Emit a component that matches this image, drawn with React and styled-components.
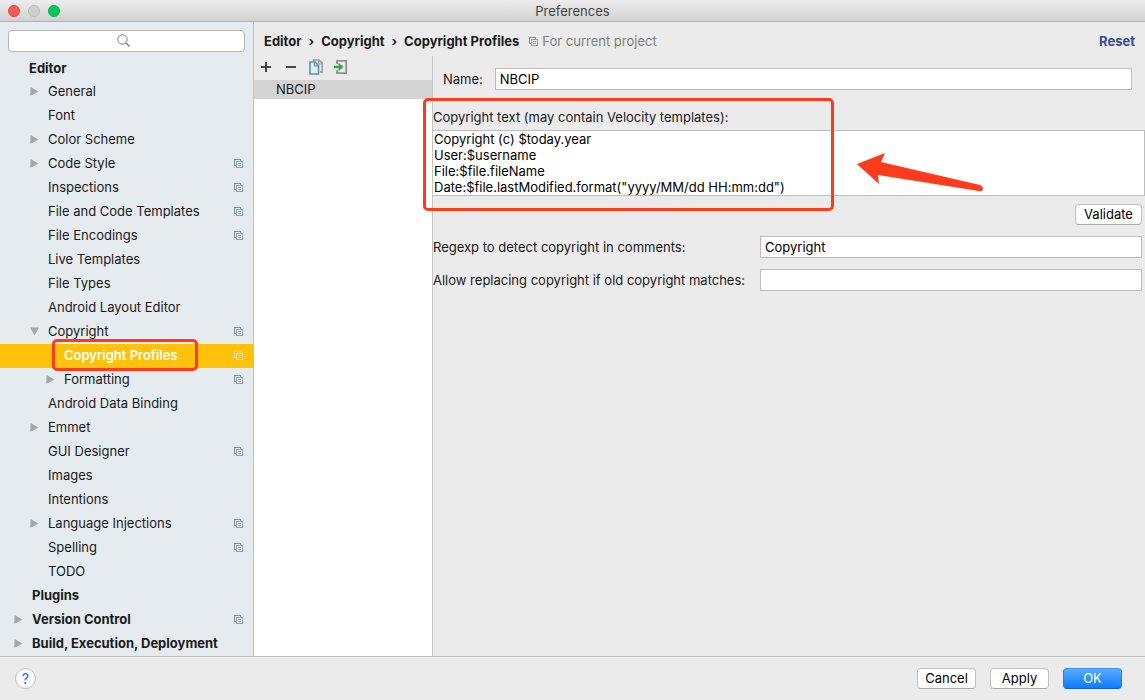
import React, { useState } from "react";
import styled, { createGlobalStyle, css } from "styled-components";

const settings = [
  { name: "Editor", level: 1, bold: true, first: true },
  { name: "General", level: 2, arrow: "closed" },
  { name: "Font", level: 2 },
  { name: "Color Scheme", level: 2, arrow: "closed" },
  { name: "Code Style", level: 2, arrow: "closed", project: true },
  { name: "Inspections", level: 2, project: true },
  { name: "File and Code Templates", level: 2, project: true },
  { name: "File Encodings", level: 2, project: true },
  { name: "Live Templates", level: 2 },
  { name: "File Types", level: 2 },
  { name: "Android Layout Editor", level: 2 },
  { name: "Copyright", level: 2, arrow: "open", project: true },
  { name: "Copyright Profiles", level: 3, project: true, marked: true },
  { name: "Formatting", level: 3, arrow: "closed", project: true },
  { name: "Android Data Binding", level: 2 },
  { name: "Emmet", level: 2, arrow: "closed" },
  { name: "GUI Designer", level: 2, project: true },
  { name: "Images", level: 2 },
  { name: "Intentions", level: 2 },
  { name: "Language Injections", level: 2, arrow: "closed", project: true },
  { name: "Spelling", level: 2, project: true },
  { name: "TODO", level: 2 },
  { name: "Plugins", level: 1, bold: true },
  { name: "Version Control", level: 1, bold: true, arrow: "closed", project: true },
  { name: "Build, Execution, Deployment", level: 1, bold: true, arrow: "closed" },
];

const template = `Copyright (c) $today.year
User:$username
File:$file.fileName
Date:$file.lastModified.format("yyyy/MM/dd HH:mm:dd")`;

function ProjectIcon({ light }) {
  const back = light ? "#d3d9b4" : "#5f9dbf";
  const front = light ? "#dcdcc8" : "#9a9fa2";
  return (
    <svg width="9" height="9" viewBox="0 0 9 9" fill="none" shapeRendering="crispEdges">
      <path d="M2 6.5H.5V.5H6.5V2" stroke={back} />
      <path d="M2.5 2.5h6v6h-6zM4 4.5h3M4 6.5h3" stroke={front} />
    </svg>
  );
}

function SearchIcon() {
  return (
    <svg width="13" height="13" viewBox="0 0 13 13" fill="none" stroke="#777">
      <circle cx="5.5" cy="5.5" r="4.7" />
      <path d="M9 9l3.5 3.5" strokeWidth="1.2" />
    </svg>
  );
}

function Arrow({ state }) {
  if (!state) return <ArrowSlot />;
  return (
    <ArrowSlot>
      <svg width="9" height="9" viewBox="0 0 9 9" fill="#a5a8aa">
        <path d={state === "open" ? "M0 .5h9L4.5 8.5z" : "M.5 0v9L8.5 4.5z"} />
      </svg>
    </ArrowSlot>
  );
}

function App() {
  const [selected, setSelected] = useState("Copyright Profiles");
  const [name, setName] = useState("NBCIP");
  const [text, setText] = useState(template);
  const [regexp, setRegexp] = useState("Copyright");
  const [replace, setReplace] = useState("");

  return (
    <Window>
      <GlobalStyle />
      <TitleBar>
        <Lights>
          <Light $color="#fc5753" $edge="#e0443f" aria-label="Close" />
          <Light $color="#cfcfcf" $edge="#b9b9b9" aria-label="Minimize" />
          <Light $color="#06c955" $edge="#05b04a" aria-label="Zoom" />
        </Lights>
        <Title>Preferences</Title>
      </TitleBar>

      <Body>
        <Sidebar>
          <Search>
            <SearchInput type="search" aria-label="Search settings" />
            <SearchMark>
              <SearchIcon />
            </SearchMark>
          </Search>
          <Tree>
            {settings.map((item) => {
              const active = item.name === selected;
              return (
                <li key={item.name}>
                  <TreeRow
                    type="button"
                    $level={item.level}
                    $bold={item.bold}
                    $active={active}
                    $first={item.first}
                    onClick={() => setSelected(item.name)}
                  >
                    <Arrow state={item.arrow} />
                    <TreeName>
                      {item.name}
                      {item.marked && <RowMark />}
                    </TreeName>
                    {item.project && <ProjectIcon light={active} />}
                  </TreeRow>
                </li>
              );
            })}
          </Tree>
        </Sidebar>

        <Main>
          <Header>
            <Crumbs>
              <span>Editor</span>
              <span>›</span>
              <span>Copyright</span>
              <span>›</span>
              <span>Copyright Profiles</span>
            </Crumbs>
            <Scope>
              <ProjectIcon />
              For current project
            </Scope>
            <Reset href="#reset">Reset</Reset>
          </Header>

          <Content>
            <Profiles>
              <Toolbar>
                <ToolButton aria-label="Add">
                  <svg width="12" height="12" viewBox="0 0 12 12" stroke="#454545" strokeWidth="2">
                    <path d="M6 1v10M1 6h10" />
                  </svg>
                </ToolButton>
                <ToolButton aria-label="Remove">
                  <svg width="12" height="12" viewBox="0 0 12 12" stroke="#454545" strokeWidth="2">
                    <path d="M1 6h10" />
                  </svg>
                </ToolButton>
                <ToolButton aria-label="Copy">
                  <svg width="16" height="16" viewBox="0 0 16 16" fill="none">
                    <path d="M5.5 2V1H11l3.2 3.2V13H12" stroke="#9b9b9b" strokeWidth="1.6" />
                    <path d="M10.5 1v4h4" stroke="#9b9b9b" />
                    <path d="M2 3h5l3.5 3.5V15H2z" fill="#e6edf2" stroke="#5c91b3" strokeWidth="1.6" />
                    <path d="M6.7 3v4h4" stroke="#5c91b3" strokeWidth="1.2" />
                  </svg>
                </ToolButton>
                <ToolButton aria-label="Import">
                  <svg width="16" height="16" viewBox="0 0 16 16" fill="none">
                    <path d="M4 5V1.8h9.2v12.4H4V11" stroke="#929292" strokeWidth="1.8" />
                    <path d="M1 6.7h4.5V3.8L10.5 8l-5 4.2V9.3H1z" fill="#30a950" />
                  </svg>
                </ToolButton>
              </Toolbar>
              <ProfileList>
                <Profile>NBCIP</Profile>
              </ProfileList>
            </Profiles>

            <Form onSubmit={(e) => e.preventDefault()}>
              <NameRow>
                <label htmlFor="name">Name:</label>
                <Field id="name" value={name} onChange={(e) => setName(e.target.value)} />
              </NameRow>
              <TextSection>
                <TextLabel htmlFor="text">
                  Copyright text (may contain Velocity templates):
                </TextLabel>
                <TextArea
                  id="text"
                  rows={4}
                  spellCheck={false}
                  value={text}
                  onChange={(e) => setText(e.target.value)}
                />
                <TextMark />
                <Pointer width="128" height="42" viewBox="0 0 128 42">
                  <path
                    d="M1 12L29 1L25 10L124 33Q127 34 127 37Q126 40 123 39L22 23L23 32Z"
                    fill="#ff3b1d"
                  />
                </Pointer>
              </TextSection>
              <ValidateRow>
                <Button type="button">Validate</Button>
              </ValidateRow>
              <Matches>
                <label htmlFor="regexp">Regexp to detect copyright in comments:</label>
                <Field id="regexp" value={regexp} onChange={(e) => setRegexp(e.target.value)} />
                <label htmlFor="replace">Allow replacing copyright if old copyright matches:</label>
                <Field id="replace" value={replace} onChange={(e) => setReplace(e.target.value)} />
              </Matches>
            </Form>
          </Content>
        </Main>
      </Body>

      <Footer>
        <Help type="button">?</Help>
        <Actions>
          <Button type="button" $wide>Cancel</Button>
          <Button type="button" $wide>Apply</Button>
          <Button type="button" $wide $primary>OK</Button>
        </Actions>
      </Footer>
    </Window>
  );
}

const GlobalStyle = createGlobalStyle`
  * {
    box-sizing: border-box;
  }
  body {
    margin: 0;
    background: #ebebeb;
  }
  body, button, input, textarea {
    font-family: Inter, "Liberation Sans", sans-serif;
    font-size: 13px;
    line-height: 16px;
    color: #1a1a1a;
  }
  button, input, textarea {
    margin: 0;
  }
  svg {
    display: block;
    flex-shrink: 0;
  }
`;

const mark = css`
  position: absolute;
  border: 3px solid #ff3b1d;
  border-radius: 5px;
  pointer-events: none;
`;

const Window = styled.div`
  display: flex;
  flex-direction: column;
  min-height: 100vh;
  background: #ebebeb;
`;

const TitleBar = styled.header`
  display: grid;
  grid-template-columns: 1fr auto 1fr;
  align-items: center;
  height: 22px;
  padding: 0 8px;
  background: linear-gradient(#ececec, #d2d2d2);
  border-bottom: 1px solid #b1b1b1;
`;

const Lights = styled.div`
  display: flex;
  gap: 8px;
`;

const Light = styled.button`
  width: 12px;
  height: 12px;
  padding: 0;
  border: 1px solid ${(p) => p.$edge};
  border-radius: 50%;
  background: ${(p) => p.$color};
`;

const Title = styled.div`
  color: #454545;
`;

const Body = styled.div`
  display: flex;
  flex: 1;
`;

const Sidebar = styled.nav`
  width: 254px;
  flex-shrink: 0;
  background: #e6ebef;
  border-right: 1px solid #c0c2c4;
`;

const Search = styled.div`
  position: relative;
  padding: 8px 8px 6px;
`;

const SearchInput = styled.input`
  display: block;
  width: 100%;
  height: 22px;
  padding: 0 8px;
  border: 1px solid #b5b7b9;
  border-radius: 4px;
  background: #fff;
`;

const SearchMark = styled.span`
  position: absolute;
  top: 12px;
  left: 50%;
  margin-left: -10px;
  pointer-events: none;
`;

const Tree = styled.ul`
  margin: 0;
  padding: 0;
  list-style: none;
`;

const TreeRow = styled.button`
  display: flex;
  align-items: center;
  width: 100%;
  height: ${(p) => (p.$first ? 22 : 24)}px;
  padding: 0 10px 2px ${(p) => (p.$first ? 11 : p.$level * 16 - 2)}px;
  border: 0;
  background: ${(p) => (p.$active ? "#ffc20a" : "transparent")};
  color: ${(p) => (p.$active ? "#fff" : "#1a1a1a")};
  font-weight: ${(p) => (p.$bold ? 700 : p.$active ? 600 : 400)};
  text-align: left;
  white-space: nowrap;
`;

const ArrowSlot = styled.span`
  width: 18px;
  flex-shrink: 0;
`;

const TreeName = styled.span`
  position: relative;
  margin-right: auto;
`;

const RowMark = styled.span`
  ${mark}
  inset: -8px -20px -8px -12px;
`;

const Main = styled.main`
  display: flex;
  flex-direction: column;
  flex: 1;
  min-width: 0;
`;

const Header = styled.div`
  display: flex;
  align-items: center;
  height: 34px;
  padding: 4px 10px 0;
`;

const Crumbs = styled.div`
  display: flex;
  gap: 7px;
  font-weight: 700;
`;

const Scope = styled.div`
  display: flex;
  align-items: center;
  gap: 4px;
  margin-left: 10px;
  color: #808080;
`;

const Reset = styled.a`
  margin-left: auto;
  color: #3c4b8f;
  font-weight: 700;
  text-decoration: none;
`;

const Content = styled.div`
  display: flex;
  flex: 1;
`;

const Profiles = styled.section`
  display: flex;
  flex-direction: column;
  width: 179px;
  flex-shrink: 0;
  border-right: 1px solid #c4c4c4;
`;

const Toolbar = styled.div`
  display: flex;
  align-items: center;
  gap: 5px;
  height: 24px;
  padding: 0 2px 2px;
`;

const ToolButton = styled.button`
  display: flex;
  align-items: center;
  justify-content: center;
  width: 20px;
  height: 20px;
  padding: 0;
  border: 0;
  background: transparent;
`;

const ProfileList = styled.ul`
  flex: 1;
  margin: 0;
  padding: 0;
  background: #fff;
  list-style: none;
`;

const Profile = styled.li`
  padding: 1px 22px 2px;
  background: #d4d4d4;
`;

const Form = styled.form`
  flex: 1;
  min-width: 0;
`;

const Field = styled.input`
  flex: 1;
  min-width: 0;
  height: 22px;
  padding: 0 4px;
  border: 1px solid #bcbcbc;
  border-radius: 0;
  background: #fff;
  color: #000;
`;

const NameRow = styled.div`
  display: flex;
  align-items: center;
  gap: 12px;
  padding: 12px 13px 0 10px;
`;

const TextSection = styled.div`
  position: relative;
  padding-top: 19px;
`;

const TextLabel = styled.label`
  display: block;
  height: 21px;
`;

const TextArea = styled.textarea`
  display: block;
  width: 100%;
  padding: 0 0 0 1px;
  border: 1px solid #bcbcbc;
  border-left: 0;
  background: #fff;
  color: #000;
  resize: none;
  overflow: hidden;
`;

const TextMark = styled.span`
  ${mark}
  top: 8px;
  left: -10px;
  width: 411px;
  height: 113px;
`;

const Pointer = styled.svg`
  position: absolute;
  top: 62px;
  left: 423px;
`;

const ValidateRow = styled.div`
  display: flex;
  justify-content: flex-end;
  padding: 8px 3px 11px;
`;

const Matches = styled.div`
  display: grid;
  grid-template-columns: auto 1fr;
  align-items: center;
  gap: 11px 15px;
  padding-right: 3px;
`;

const Button = styled.button`
  height: 21px;
  min-width: ${(p) => (p.$wide ? 59 : 67)}px;
  padding: 0 7px 2px;
  border: 1px solid #c2c2c2;
  border-bottom-color: #a9a9a9;
  border-radius: 4px;
  background: #fff;
  color: #000;
  ${(p) =>
    p.$primary &&
    css`
      border-color: #3d93f5 #2180f5 #0a63e6;
      background: linear-gradient(#5aabfb, #0a7cff);
      color: #fff;
    `}
`;

const Footer = styled.footer`
  display: flex;
  align-items: center;
  justify-content: space-between;
  height: 44px;
  padding: 0 23px 0 15px;
  border-top: 1px solid #c0c0c0;
`;

const Help = styled.button`
  width: 21px;
  height: 21px;
  padding: 0;
  border: 1px solid #bdbdbd;
  border-radius: 50%;
  background: #fff;
  color: #1482ff;
  font-size: 14px;
  font-weight: 500;
`;

const Actions = styled.div`
  display: flex;
  gap: 14px;
`;

export default App;
